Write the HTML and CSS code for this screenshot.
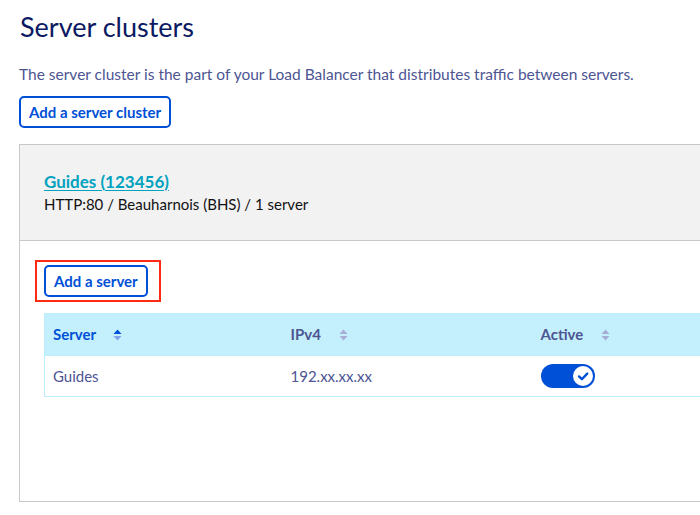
FILE: index.html
```html
<!DOCTYPE html>
<html lang="en">
<head>
<meta charset="utf-8">
<title>Server clusters</title>
<link rel="stylesheet" href="styles.css">
</head>
<body>
<main class="page">
  <h1 class="title">Server clusters</h1>
  <p class="intro">The server cluster is the part of your Load Balancer that distributes traffic between servers.</p>
  <div class="actions">
    <button class="btn">Add a server cluster</button>
  </div>
  <section class="card">
    <header class="card-head">
      <a class="cluster-link" href="#">Guides (123456)</a>
      <div class="cluster-meta">HTTP:80 / Beauharnois (BHS) / 1 server</div>
    </header>
    <div class="card-body">
      <div class="highlight">
        <button class="btn">Add a server</button>
      </div>
      <table class="servers">
        <thead>
          <tr>
            <th class="col-server sorted">Server <span class="sort"><svg width="9" height="12" viewBox="0 0 9 12"><path class="up" d="M4.5 0.5 L8.5 5 H0.5 Z"/><path class="down" d="M4.5 11.5 L8.5 7 H0.5 Z"/></svg></span></th>
            <th class="col-ip">IPv4 <span class="sort"><svg width="9" height="12" viewBox="0 0 9 12"><path class="up" d="M4.5 0.5 L8.5 5 H0.5 Z"/><path class="down" d="M4.5 11.5 L8.5 7 H0.5 Z"/></svg></span></th>
            <th class="col-active">Active <span class="sort"><svg width="9" height="12" viewBox="0 0 9 12"><path class="up" d="M4.5 0.5 L8.5 5 H0.5 Z"/><path class="down" d="M4.5 11.5 L8.5 7 H0.5 Z"/></svg></span></th>
          </tr>
        </thead>
        <tbody>
          <tr>
            <td>Guides</td>
            <td>192.xx.xx.xx</td>
            <td>
              <span class="toggle">
                <span class="knob"><svg width="14" height="14" viewBox="0 0 14 14"><path d="M3 7.4 L5.9 10.2 L11.2 4.6" fill="none" stroke="#0050d7" stroke-width="2.4" stroke-linecap="round" stroke-linejoin="round"/></svg></span>
              </span>
            </td>
          </tr>
        </tbody>
      </table>
    </div>
  </section>
</main>
</body>
</html>
```

FILE: styles.css
```css
* { box-sizing: border-box; }
html, body { margin: 0; padding: 0; background: #fff; }
body {
  font-family: Lato, "Open Sans", "Liberation Sans", sans-serif;
  color: #4d5592;
  overflow: hidden;
  width: 700px;
  height: 515px;
}
.page {
  padding: 8px 0 0 19px;
  width: 740px;
}
.title {
  margin: 0 0 0 1px;
  font-size: 27px;
  font-weight: 400;
  line-height: 38px;
  color: #0b1a63;
}
.intro {
  margin: 18px 0 0 0;
  font-size: 15.5px;
  line-height: 20px;
  color: #4d5592;
}
.actions { margin-top: 12px; }
.btn {
  display: inline-block;
  height: 32px;
  padding: 0 8px;
  border: 2px solid #0050d7;
  border-radius: 5px;
  background: #fff;
  color: #0050d7;
  font-family: inherit;
  font-size: 15px;
  font-weight: 700;
  line-height: 28px;
  cursor: pointer;
}
.card {
  margin-top: 16px;
  border: 1px solid #c8c8c8;
  height: 358px;
  background: #fff;
}
.card-head {
  background: #f2f2f2;
  border-bottom: 1px solid #c8c8c8;
  height: 96px;
  padding: 26px 0 0 24px;
}
.cluster-link {
  display: block;
  font-size: 17px;
  font-weight: 700;
  line-height: 22px;
  color: #00a2bf;
  text-decoration: underline;
  text-underline-offset: 2px;
}
.cluster-meta {
  margin-top: 1px;
  font-size: 15px;
  line-height: 20px;
  color: #111;
}
.card-body { padding: 19px 0 0 15px; }
.highlight {
  display: inline-block;
  border: 2px solid #ff2a12;
  padding: 3px 11px 3px 7px;
}
.servers {
  margin: 11px 0 0 9px;
  width: 700px;
  border-collapse: collapse;
  border: 1px solid #bdeefd;
  font-size: 15px;
}
.servers thead tr { background: #c4f0fe; }
.servers th {
  height: 42px;
  padding: 0 0 0 8px;
  text-align: left;
  font-weight: 700;
  color: #4d5592;
  white-space: nowrap;
}
.servers th.sorted { color: #0050d7; }
.col-server { width: 238px; }
.col-ip { width: 250px; }
.sort { display: inline-block; margin-left: 14px; vertical-align: -1px; }
.sort path { fill: #a6aed6; }
.sorted .sort .up { fill: #0050d7; }
.sorted .sort .down { fill: #7fa3e8; }
.servers td {
  height: 41px;
  padding: 0 0 0 8px;
  color: #4d5592;
  border-top: 1px solid #bdeefd;
}
.toggle {
  display: flex;
  justify-content: flex-end;
  align-items: center;
  width: 54px;
  height: 24px;
  border-radius: 12px;
  background: #0050d7;
  padding-right: 2px;
}
.knob {
  width: 20px;
  height: 20px;
  border-radius: 50%;
  background: #fff;
  display: flex;
  align-items: center;
  justify-content: center;
}
```
